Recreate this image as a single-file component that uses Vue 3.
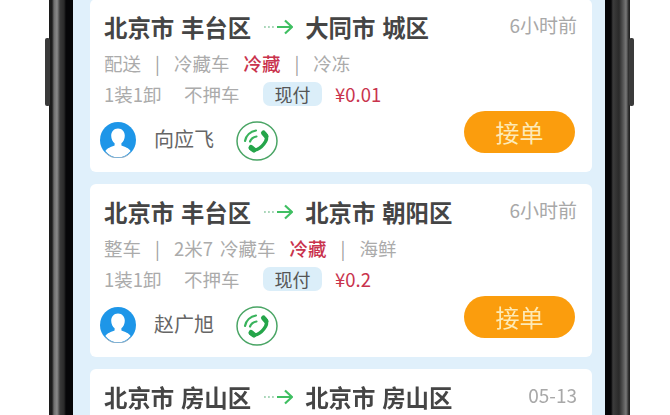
<template>
  <div class="page">
    <div class="phone">
      <span class="side-btn left"></span>
      <span class="side-btn right"></span>
      <div class="bezel bezel-l"></div>
      <div class="screen">
        <div class="list">
          <div v-for="order in orders" :key="order.id" class="card">
            <div class="route">
              <span class="city">{{ order.from }}</span>
              <svg class="arrow" width="30" height="16" viewBox="0 0 30 16">
                <path d="M1 8h12" stroke="#a9d6b9" stroke-width="1.8" stroke-dasharray="1.8 2.2" fill="none" />
                <path d="M14 8h15M22 1.500 29 8l-7 6.500" stroke="#3fbf62" stroke-width="2.200" fill="none" />
              </svg>
              <span class="city">{{ order.to }}</span>
              <span class="time">{{ order.time }}</span>
            </div>
            <template v-if="order.kind">
              <div class="tags">
                <span>{{ order.kind }}</span>
                <i class="sep">|</i>
                <span class="truck">{{ order.truck }}</span>
                <span class="temp">冷藏</span>
                <i class="sep">|</i>
                <span>{{ order.goods }}</span>
              </div>
              <div class="info">
                <span class="load">1装1卸</span>
                <span class="deposit">不押车</span>
                <span class="pay">现付</span>
                <span class="price">¥{{ order.price }}</span>
              </div>
              <div class="foot">
                <div class="user">
                  <svg class="avatar" width="36" height="36" viewBox="0 0 36 36">
                    <circle cx="18" cy="18" r="18" fill="#1e96e8" />
                    <path d="M18 6.500c-4.300 0-6.800 3.300-6.800 7.300 0 3.200 1.500 6 3.400 7.500v2.200c-3.200 1.300-7.800 2.700-9.200 5.500C8.700 33.300 13 35.300 18 35.300s9.300-2 12.600-6.300c-1.400-2.800-6-4.200-9.200-5.500v-2.200c1.900-1.500 3.400-4.300 3.400-7.500 0-4-2.500-7.300-6.800-7.300z" fill="#fff" />
                    <path d="M5.400 30.600C8.700 34.300 13 36 18 36s9.300-1.700 12.600-5.400" stroke="#9fb4c4" stroke-width="1" fill="none" />
                  </svg>
                  <span class="name">{{ order.name }}</span>
                  <svg class="call" width="42" height="40" viewBox="0 0 42 40">
                    <ellipse cx="21" cy="20" rx="20" ry="19" fill="#fff" stroke="#4aa565" stroke-width="1.500" />
                    <path d="M29 13c2 2 2.300 4 .5 7.500-2 3.500-5 6.500-8.500 8-2.800 1.200-4.700.7-6.500-1" stroke="#25a54a" stroke-width="3.500" stroke-linecap="round" fill="none" />
                    <path d="M27.500 12l2.500 3M15 26.500l3 2.500" stroke="#25a54a" stroke-width="5" stroke-linecap="round" fill="none" />
                    <path d="M9 20C10 14.500 14.500 10.500 20 9.500M14 20.500c1-2.500 3.500-4.500 6.500-5" stroke="#39b35c" stroke-width="2.200" stroke-linecap="round" fill="none" />
                  </svg>
                </div>
                <button class="take">接单</button>
              </div>
            </template>
          </div>
        </div>
      </div>
      <div class="bezel bezel-r"></div>
    </div>
  </div>
</template>

<script setup>
const orders = [
  { id: 1, from: '北京市 丰台区', to: '大同市 城区', time: '6小时前', kind: '配送', truck: '冷藏车', goods: '冷冻', price: '0.01', name: '向应飞' },
  { id: 2, from: '北京市 丰台区', to: '北京市 朝阳区', time: '6小时前', kind: '整车', truck: '2米7 冷藏车', goods: '海鲜', price: '0.2', name: '赵广旭' },
  // only the route row of this one is on screen
  { id: 3, from: '北京市 房山区', to: '北京市 房山区', time: '05-13' },
]
</script>

<style>
html, body {
  margin: 0;
  background: #fff;
  overflow: hidden;
}
</style>

<style scoped>
.page {
  width: 670px;
  height: 415px;
  overflow: hidden;
  background: #fff;
  font-family: "Noto Sans CJK SC", "Noto Sans", sans-serif;
}

.phone {
  position: relative;
  display: flex;
  width: 581px;
  height: 415px;
  margin-left: 49px;
}

.side-btn {
  position: absolute;
  top: 38px;
  width: 5px;
  height: 68px;
  background: #3a3a3a;
  border-radius: 2px;
}
.side-btn.left { left: -4px; }
.side-btn.right { right: -4px; }

.bezel {
  flex: none;
}
.bezel-l {
  width: 24px;
  background: linear-gradient(90deg, #1c1c1c 0, #1c1c1c 3px, #6e6e6e 5px, #8a8a8a 8px, #3a3a3a 11px, #2a2a2a 15px, #060608 17px, #060608 24px);
}
.bezel-r {
  width: 25px;
  background: linear-gradient(90deg, #060608 0, #060608 6px, #3c3c3c 8px, #2a2a2a 14px, #555 18px, #777 21px, #222 24px);
}

.screen {
  flex: 1;
  background: #e0f0fb;
  padding: 0 13px 0 17px;
  min-width: 0;
  filter: blur(0.45px);
}

.list {
  display: flex;
  flex-direction: column;
  gap: 12px;
  margin-top: -1px;
}

.card {
  flex: none;
  height: 173px;
  box-sizing: border-box;
  padding: 12px 14px 0;
  background: #fff;
  border-radius: 6px;
}

.route {
  display: flex;
  align-items: center;
  height: 32px;
}
.city {
  font-size: 23.400px;
  font-weight: 700;
  color: #454545;
  word-spacing: 1.500px;
  white-space: nowrap;
}
.arrow {
  margin: 0 12px;
  flex: none;
}
.time {
  margin-left: auto;
  margin-bottom: 6px;
  padding-right: 1px;
  font-size: 19px;
  color: #a8a8a8;
  white-space: nowrap;
}

.tags {
  display: flex;
  align-items: center;
  gap: 14px;
  height: 28px;
  margin-top: 6px;
  font-size: 18.500px;
  color: #ababab;
  white-space: nowrap;
}
.truck {
  word-spacing: 3px;
}
.sep {
  font-style: normal;
  font-size: 18px;
  color: #a0a0a0;
}
.temp {
  color: #c9334d;
  font-weight: 500;
}

.info {
  display: flex;
  align-items: center;
  height: 26px;
  margin-top: 4px;
  font-size: 18.500px;
  color: #ababab;
  white-space: nowrap;
}
.load { width: 80px; }
.deposit { width: 79px; }
.pay {
  width: 59px;
  height: 24px;
  line-height: 24px;
  text-align: center;
  background: #dbeef9;
  border-radius: 7px;
  color: #555;
  font-size: 18px;
}
.price {
  margin-left: 13px;
  color: #c9334d;
  font-size: 18.500px;
}

.foot {
  display: flex;
  justify-content: space-between;
  align-items: flex-start;
  margin-top: 4px;
}
.user {
  display: flex;
  align-items: center;
  padding-top: 7px;
  margin-left: -4px;
}
.avatar {
  flex: none;
}
.name {
  width: 82px;
  margin-left: 18px;
  margin-bottom: 3px;
  font-size: 20px;
  color: #666;
  white-space: nowrap;
}
.call {
  flex: none;
  margin-top: 3px;
}
.take {
  width: 111px;
  height: 42px;
  margin-right: 3px;
  padding: 0;
  border: 0;
  border-radius: 21px;
  background: #fb9d0d;
  color: #fdeab6;
  font-family: inherit;
  font-size: 24px;
  line-height: 42px;
}
</style>
